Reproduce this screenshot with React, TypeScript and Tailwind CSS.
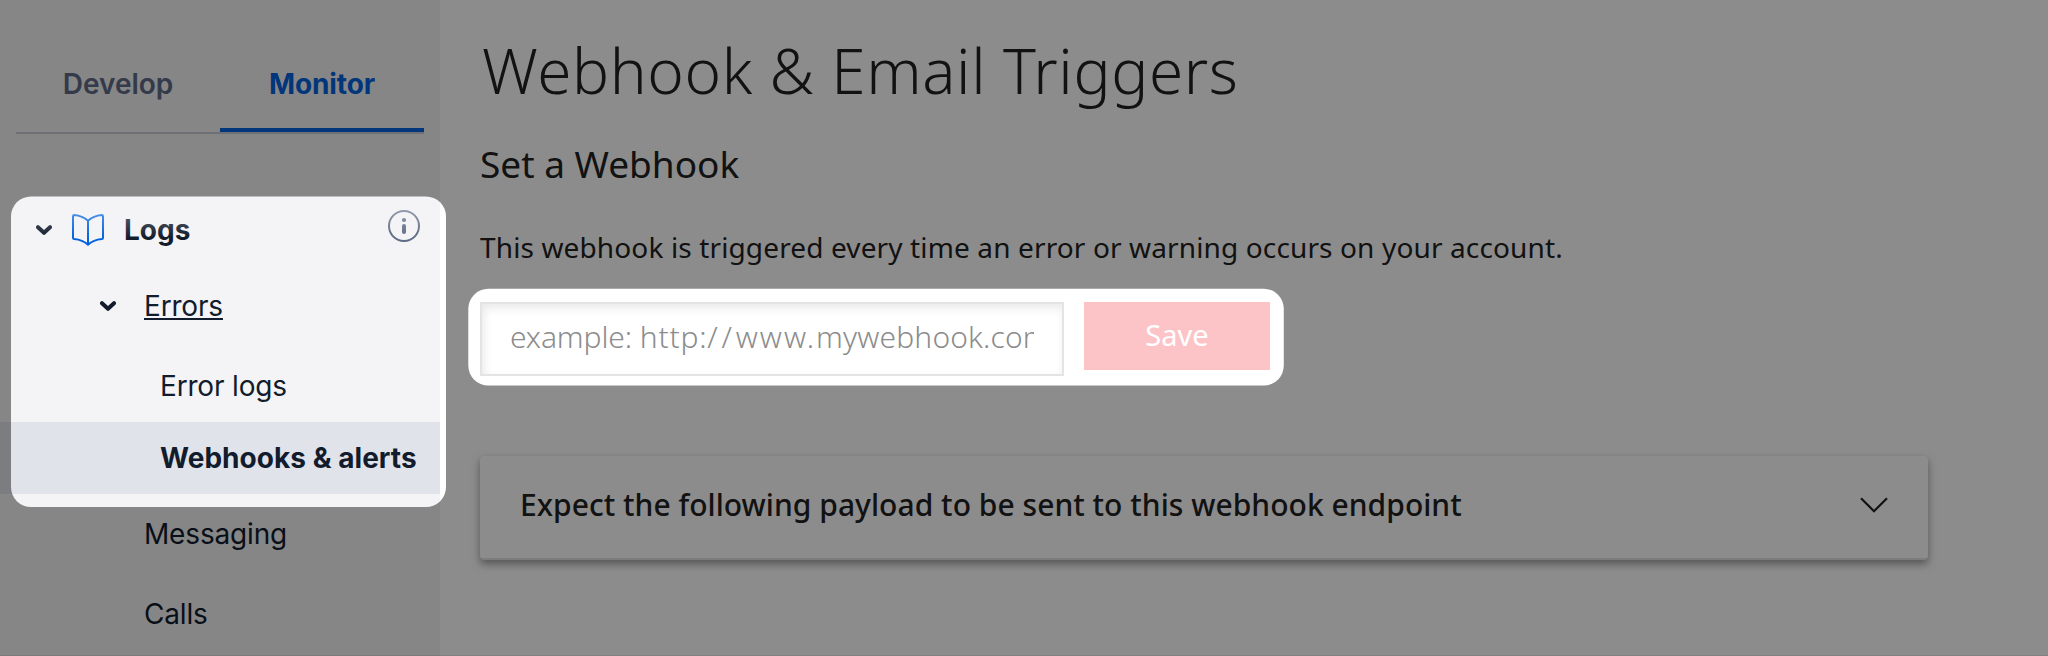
const INTER = "font-['Inter',sans-serif]";
const NOTO = "font-['Noto_Sans','Open_Sans',sans-serif]";

function SmallChevron() {
  return (
    <svg width="16" height="10" viewBox="0 0 16 10" fill="none" className="shrink-0">
      <path d="M2 2.200 8 7.800 14 2.200" stroke="#121c2d" strokeWidth="4" strokeLinecap="round" strokeLinejoin="round" />
    </svg>
  );
}

function BookIcon() {
  return (
    <svg width="32" height="32" viewBox="0 0 32 32" fill="none" className="shrink-0">
      <path
        d="M16 6.800C12.600 3.600 8.200 1.500 2.300 1C1.500 1 1 1.500 1 2.300V23.700C1 24.500 1.500 25 2.300 25.100C7.800 25.600 12.300 27.400 16 30.800C19.700 27.400 24.200 25.600 29.700 25.100C30.500 25 31 24.500 31 23.700V2.300C31 1.500 30.500 1 29.700 1C23.800 1.500 19.400 3.600 16 6.800ZM16 6.800V30.500"
        stroke="#0263e0"
        strokeWidth="2"
        strokeLinejoin="round"
      />
    </svg>
  );
}

function InfoIcon() {
  return (
    <svg width="32" height="32" viewBox="0 0 32 32" fill="none" className="shrink-0">
      <circle cx="16" cy="16" r="15" stroke="#606b85" strokeWidth="2" />
      <circle cx="16" cy="10" r="2.100" fill="#606b85" />
      <path d="M16 16v6" stroke="#606b85" strokeWidth="4" strokeLinecap="round" />
    </svg>
  );
}

function Sidebar() {
  return (
    <aside className={`${INTER} flex w-[440px] shrink-0 flex-col bg-[#f4f4f6] text-[28px] leading-9 text-[#121c2d]`}>
      <div className="mx-4 flex h-[134px] border-b-2 border-[#cacdd8] pt-9 font-semibold">
        <div className="flex flex-1 items-center justify-center text-[#606b85]">
          <span>Develop</span>
        </div>
        <div className="flex flex-1 items-center justify-center border-b-4 border-[#0263e0] pt-1 text-[#0263e0]">
          <span className="font-bold tracking-[-0.1px]">Monitor</span>
        </div>
      </div>
      <nav className="mt-16 flex flex-col tracking-[-0.17px]">
        <div className="relative flex h-16 items-center pr-5 pl-9">
          <SmallChevron />
          <span className="ml-5 flex">
            <BookIcon />
          </span>
          <span className="ml-5 flex-1 font-bold tracking-normal">Logs</span>
          <span className="mb-2 flex">
            <InfoIcon />
          </span>
          <div className="absolute inset-x-0 top-0 h-10 bg-linear-to-b from-[#f4f4f6]/50 to-[#f4f4f6]/0" />
        </div>
        <div className="flex h-[88px] items-center gap-7 pl-[100px]">
          <SmallChevron />
          <span className="underline decoration-2 underline-offset-[2px]">Errors</span>
        </div>
        <div className="flex h-[72px] items-center pl-40">Error logs</div>
        <div className="flex h-[72px] items-center bg-[#e1e3ea] pl-40 font-bold tracking-[0.04px] whitespace-nowrap">
          Webhooks &amp; alerts
        </div>
        <div className="flex h-20 items-center pl-36">Messaging</div>
        <div className="flex h-20 items-center pl-36">Calls</div>
      </nav>
    </aside>
  );
}

function Main() {
  return (
    <main className={`${NOTO} flex-1 bg-white pt-[30px] pl-10 text-[#222222]`}>
      <h1 className="pl-[2px] text-[62px] leading-[80px] font-light tracking-[0.6px]">Webhook &amp; Email Triggers</h1>
      <h2 className="mt-[30px] text-[37px] leading-[48px]">Set a Webhook</h2>
      <p className="mt-[39px] text-[28px] leading-10 tracking-[0.13px]">
        This webhook is triggered every time an error or warning occurs on your account.
      </p>
      <div className="mt-[35px] flex gap-5">
        <div className="flex h-[74px] w-[584px] items-center border-2 border-[#e4e4e4] bg-white px-7 pb-1 shadow-[inset_2px_4px_10px_rgba(0,0,0,0.09)]">
          <span className="w-[524px] overflow-hidden text-[30px] leading-10 font-light whitespace-nowrap text-[#8c8c8c]">
            <span className="tracking-[-0.1px]">example: </span>
            <span className="tracking-[0.8px]">http:</span>
            <span className="tracking-[3.8px]">//</span>
            <span className="tracking-[2px]">www.</span>
            <span className="tracking-[0.15px]">mywebhook.com</span>
          </span>
        </div>
        <div className="flex h-[68px] w-[186px] items-center justify-center bg-[#fdc4c8] pb-[3px] text-[29px] text-white">Save</div>
      </div>
      <div className="mt-20 flex h-[104px] w-[1448px] items-center justify-between rounded-[4px] border-b-2 border-[#e4e4e4] bg-white pr-10 pb-1 pl-10 shadow-[0_4px_8px_rgba(0,0,0,0.4)]">
        <span className="text-[30px] leading-10 font-medium tracking-[0.03px]">
          Expect the following payload to be sent to this webhook endpoint
        </span>
        <svg width="28" height="16" viewBox="0 0 28 16" fill="none">
          <path d="M1 1.200 14 14.200 27 1.200" stroke="#222222" strokeWidth="2.200" />
        </svg>
      </div>
    </main>
  );
}

export default function App() {
  return (
    <div className="relative flex h-[656px] w-[2048px] overflow-hidden">
      <Sidebar />
      <Main />
      <svg className="pointer-events-none absolute inset-0" width="2048" height="656" viewBox="0 0 2048 656">
        <defs>
          <mask id="spotlight">
            <rect width="2048" height="656" fill="white" />
            <rect x="11" y="196.500" width="435" height="310.500" rx="20" fill="black" />
            <rect x="468.300" y="288.800" width="815.500" height="96.700" rx="20" fill="black" />
          </mask>
        </defs>
        <rect width="2048" height="656" fill="black" fillOpacity="0.45" mask="url(#spotlight)" />
        <rect y="655" width="2048" height="1" fill="black" fillOpacity="0.08" />
      </svg>
    </div>
  );
}
